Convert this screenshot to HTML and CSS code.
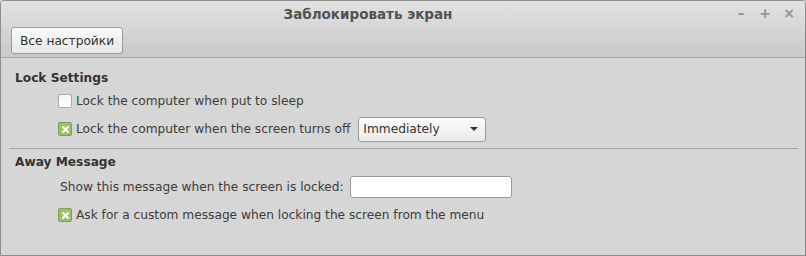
FILE: index.html
```html
<!DOCTYPE html>
<html>
<head>
<meta charset="utf-8">
<link rel="stylesheet" href="styles.css">
</head>
<body>
<div class="window">
  <div class="header">
    <div class="titlebar">
      <span class="title">Заблокировать экран</span>
      <div class="controls">
        <span class="ctl">&#8211;</span>
        <span class="ctl">+</span>
        <span class="ctl">&#215;</span>
      </div>
    </div>
    <div class="toolbar">
      <button class="btn">Все настройки</button>
    </div>
  </div>
  <div class="content">
    <div class="section">
      <div class="heading">Lock Settings</div>
      <div class="row">
        <span class="check"></span>
        <span class="label">Lock the computer when put to sleep</span>
      </div>
      <div class="row">
        <span class="check on"><svg width="9" height="9" viewBox="0 0 9 9"><path d="M1.5 1.5 L7.5 7.5 M7.5 1.5 L1.5 7.5" stroke="#fff" stroke-width="2.2"/></svg></span>
        <span class="label">Lock the computer when the screen turns off</span>
        <div class="combo"><span>Immediately</span><svg width="8" height="4" viewBox="0 0 8 4"><path d="M0 0 H8 L4 4 Z" fill="#333"/></svg></div>
      </div>
    </div>
    <div class="sep"></div>
    <div class="section">
      <div class="heading tall">Away Message</div>
      <div class="row plain">
        <span class="label">Show this message when the screen is locked:</span>
        <div class="entry"></div>
      </div>
      <div class="row">
        <span class="check on"><svg width="9" height="9" viewBox="0 0 9 9"><path d="M1.5 1.5 L7.5 7.5 M7.5 1.5 L1.5 7.5" stroke="#fff" stroke-width="2.2"/></svg></span>
        <span class="label">Ask for a custom message when locking the screen from the menu</span>
      </div>
    </div>
  </div>
</div>
</body>
</html>
```
FILE: styles.css
```css
* { box-sizing: border-box; }
html, body { margin: 0; padding: 0; }
body {
  width: 806px;
  height: 256px;
  font-family: "DejaVu Sans", sans-serif;
  font-size: 12.2px;
  color: #3c3c3c;
  background: #d6d6d6;
}
.window {
  width: 806px;
  height: 256px;
  border: 1px solid #8e8e8e;
  border-radius: 4px 4px 0 0;
  background: #d6d6d6;
  display: flex;
  flex-direction: column;
  overflow: hidden;
}
.header {
  background: linear-gradient(#e2e2e2, #c9c9c9);
  border-bottom: 1px solid #a6a6a6;
  height: 57px;
}
.titlebar {
  height: 25px;
  display: flex;
  align-items: center;
  justify-content: center;
  padding-right: 70px;
  position: relative;
}
.title {
  font-weight: bold;
  font-size: 13.5px;
  color: #525252;
}
.controls {
  position: absolute;
  right: 10px;
  top: 4px;
  display: flex;
  gap: 12px;
  color: #959595;
  font-weight: bold;
  font-size: 14px;
}
.ctl { width: 12px; text-align: center; }
.toolbar {
  padding: 1px 0 0 10px;
}
.btn {
  font-family: "DejaVu Sans", sans-serif;
  font-size: 12.2px;
  color: #333;
  height: 27px;
  padding: 0 8px;
  border: 1px solid #9c9c9c;
  border-radius: 3px;
  background: linear-gradient(#fafafa, #e8e8e8);
}
.content {
  padding: 11px 8px 0 8px;
}
.section { padding: 0 0 0 6px; }
.heading {
  font-weight: bold;
  color: #333;
  height: 18px;
  line-height: 18px;
}
.heading.tall { height: 20px; }
.row {
  display: flex;
  align-items: center;
  height: 28px;
  padding-left: 43px;
}
.row.plain { padding-left: 45px; }
.check {
  width: 14px;
  height: 14px;
  border: 1px solid #a8a8a8;
  border-radius: 2px;
  background: linear-gradient(#f4f4f4, #ffffff);
  margin-right: 4px;
  display: flex;
  align-items: center;
  justify-content: center;
}
.check.on {
  background: #9bc26a;
  border-color: #7ba04b;
}
.label { color: #3c3c3c; white-space: nowrap; }
.combo {
  margin-left: 8px;
  width: 128px;
  height: 25px;
  border: 1px solid #9c9c9c;
  border-radius: 3px;
  background: linear-gradient(#fafafa, #ececec);
  display: flex;
  align-items: center;
  justify-content: space-between;
  padding: 0 7px 0 4px;
  color: #333;
}
.sep {
  height: 1px;
  background: #a4a4a4;
  margin: 5px 0 4px 0;
  width: 789px;
}
.entry {
  margin-left: 6px;
  width: 162px;
  height: 22px;
  border: 1px solid #9a9a9a;
  border-radius: 3px;
  background: #fff;
}
```
